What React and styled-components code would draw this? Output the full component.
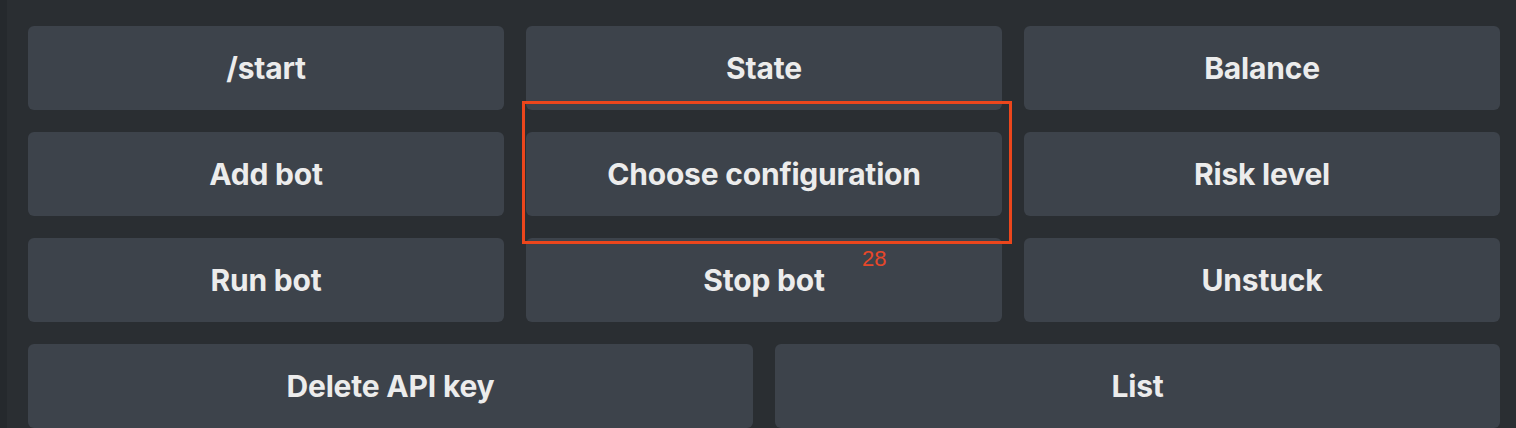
import React from 'react'
import styled, { createGlobalStyle } from 'styled-components'

const GlobalStyle = createGlobalStyle`
    html, body {
        margin: 0;
        padding: 0;
        background: #2a2e32;
        font-family: Inter, "Noto Sans", sans-serif;
    }
`

// Whole page: thin darker strip on the left and the keyboard panel
const Page = styled.div`
    display: flex;
    width: 1516px;
    height: 428px;
    overflow: hidden;
    background: #2a2e32;
`

const SideStrip = styled.div`
    width: 7px;
    flex-shrink: 0;
    background: #25292d;
`

// Reply keyboard grid, 6 columns so the last row can split in two
const Keyboard = styled.div`
    flex: 1;
    display: grid;
    grid-template-columns: repeat(6, 1fr);
    grid-auto-rows: 84px;
    gap: 22px;
    padding: 26px 16px 0 21px;
`

const Cell = styled.div`
    position: relative;
    grid-column: span ${ props => props.span || 2 };
    display: flex;
`

const KeyButton = styled.button`
    flex: 1;
    border: none;
    border-radius: 6px;
    background: #3d434b;
    color: #ececec;
    font-family: Inter, "Noto Sans", sans-serif;
    font-weight: 700;
    font-size: 30px;
    letter-spacing: -0.2px;
    cursor: pointer;
    padding: 0;
`

// Red annotation drawn over the highlighted key
const Highlight = styled.div`
    position: absolute;
    top: -31px;
    left: -4px;
    width: 490px;
    height: 143px;
    box-sizing: border-box;
    border: 3px solid #ec461c;
    pointer-events: none;
    z-index: 2;
`

const HighlightLabel = styled.span`
    position: absolute;
    top: 115px;
    left: 336px;
    color: #e6472a;
    font-family: "Liberation Sans", Arial, sans-serif;
    font-size: 22px;
    line-height: 24px;
    z-index: 2;
`

const keys = [
    { label: '/start' },
    { label: 'State' },
    { label: 'Balance' },
    { label: 'Add bot' },
    { label: 'Choose configuration', highlight: '28' },
    { label: 'Risk level' },
    { label: 'Run bot' },
    { label: 'Stop bot' },
    { label: 'Unstuck' },
    { label: 'Delete API key', span: 3 },
    { label: 'List', span: 3 }
]

const App = () => {
    return (
        <Page>
            <GlobalStyle />
            <SideStrip />
            <Keyboard>
                { keys.map(({ label, span, highlight }) => (
                    <Cell key={ label } span={ span }>
                        <KeyButton>{ label }</KeyButton>
                        { highlight ? <Highlight /> : null }
                        { highlight ? <HighlightLabel>{ highlight }</HighlightLabel> : null }
                    </Cell>
                )) }
            </Keyboard>
        </Page>
    )
}

export default App
